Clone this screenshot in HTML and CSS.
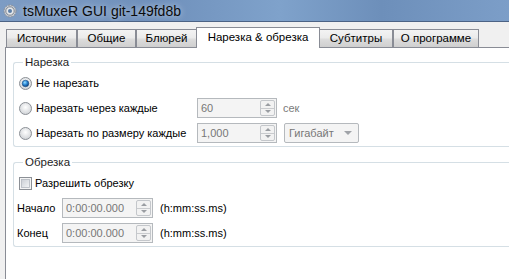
FILE: index.html
```html
<!DOCTYPE html>
<html lang="ru">
<head>
    <meta charset="UTF-8" />
    <title>tsMuxeR GUI</title>
    <link rel="stylesheet" href="styles.css">
</head>
<body>
    <div class="window">
        <div class="titlebar">
            <svg class="app-icon" width="14" height="14" viewBox="0 0 14 14">
                <circle cx="7" cy="7" r="6" fill="#c8ccd2" stroke="#8a9099" stroke-width="1" stroke-dasharray="2 1.2" />
                <circle cx="7" cy="7" r="4.2" fill="#e6e8eb" stroke="#7d8590" stroke-width="1" />
                <circle cx="7" cy="7" r="2" fill="#5d7fa8" />
            </svg>
            <span>tsMuxeR GUI git-149fd8b</span>
        </div>

        <div class="client">
            <div class="tabs">
                <div class="tab t-src">Источник</div>
                <div class="tab t-gen">Общие</div>
                <div class="tab t-bd">Блюрей</div>
                <div class="tab tab-active">Нарезка &amp; обрезка</div>
                <div class="tab t-sub">Субтитры</div>
                <div class="tab t-about">О программе</div>
            </div>

            <div class="pane">
                <fieldset class="group">
                    <legend>Нарезка</legend>
                    <div class="row">
                        <span class="opt">
                            <svg class="radio" width="13" height="13" viewBox="0 0 13 13">
                                <defs>
                                    <radialGradient id="rbg" cx="50%" cy="40%" r="60%">
                                        <stop offset="0" stop-color="#ffffff" />
                                        <stop offset="1" stop-color="#cfd2d6" />
                                    </radialGradient>
                                    <radialGradient id="rdot" cx="40%" cy="35%" r="65%">
                                        <stop offset="0" stop-color="#9be0ff" />
                                        <stop offset="0.5" stop-color="#2d8ad8" />
                                        <stop offset="1" stop-color="#0b3f7a" />
                                    </radialGradient>
                                </defs>
                                <circle cx="6.5" cy="6.5" r="6" fill="url(#rbg)" stroke="#8c9096" />
                                <circle cx="6.5" cy="6.5" r="3.3" fill="url(#rdot)" stroke="#1d4f86" stroke-width="0.6" />
                            </svg>
                            Не нарезать
                        </span>
                    </div>
                    <div class="row">
                        <span class="opt opt-wide">
                            <svg class="radio" width="13" height="13" viewBox="0 0 13 13">
                                <circle cx="6.5" cy="6.5" r="6" fill="url(#rbg)" stroke="#8c9096" />
                            </svg>
                            Нарезать через каждые
                        </span>
                        <div class="spin spin-short">
                            <span class="spin-val">60</span>
                            <span class="spin-btns"><span class="up"></span><span class="down"></span></span>
                        </div>
                        <span class="unit">сек</span>
                    </div>
                    <div class="row">
                        <span class="opt opt-wide">
                            <svg class="radio" width="13" height="13" viewBox="0 0 13 13">
                                <circle cx="6.5" cy="6.5" r="6" fill="url(#rbg)" stroke="#8c9096" />
                            </svg>
                            Нарезать по размеру каждые
                        </span>
                        <div class="spin spin-short">
                            <span class="spin-val">1,000</span>
                            <span class="spin-btns"><span class="up"></span><span class="down"></span></span>
                        </div>
                        <div class="combo">
                            <span>Гигабайт</span>
                            <span class="combo-arrow"></span>
                        </div>
                    </div>
                </fieldset>

                <fieldset class="group group-cut">
                    <legend>Обрезка</legend>
                    <div class="row">
                        <span class="opt">
                            <svg class="check" width="13" height="13" viewBox="0 0 13 13">
                                <defs>
                                    <linearGradient id="cbg" x1="0" y1="0" x2="1" y2="1">
                                        <stop offset="0" stop-color="#cbcfd5" />
                                        <stop offset="1" stop-color="#f4f5f6" />
                                    </linearGradient>
                                </defs>
                                <rect x="0.5" y="0.5" width="12" height="12" fill="#f4f4f4" stroke="#8c9096" />
                                <rect x="2.5" y="2.5" width="8" height="8" fill="url(#cbg)" stroke="#b4b9c0" stroke-width="0.8" />
                            </svg>
                            Разрешить обрезку
                        </span>
                    </div>
                    <div class="row">
                        <span class="lbl">Начало</span>
                        <div class="spin spin-time">
                            <span class="spin-val">0:00:00.000</span>
                            <span class="spin-btns"><span class="up"></span><span class="down"></span></span>
                        </div>
                        <span class="hint">(h:mm:ss.ms)</span>
                    </div>
                    <div class="row">
                        <span class="lbl">Конец</span>
                        <div class="spin spin-time">
                            <span class="spin-val">0:00:00.000</span>
                            <span class="spin-btns"><span class="up"></span><span class="down"></span></span>
                        </div>
                        <span class="hint">(h:mm:ss.ms)</span>
                    </div>
                </fieldset>
            </div>
        </div>
    </div>
</body>
</html>
```

FILE: styles.css
```css
body {
    margin: 0;
    width: 509px;
    height: 279px;
    overflow: hidden;
    font-family: 'Liberation Sans', Arial, sans-serif;
    font-size: 11px;
    color: #000;
    background-color: #f0f0f0;
}

.window {
    width: 509px;
    overflow: hidden;
}

.titlebar {
    height: 21px;
    display: flex;
    align-items: center;
    gap: 6px;
    padding-left: 3px;
    font-size: 14px;
    background: linear-gradient(to right, #7d9cc4 0%, #6f90bb 30%, #7fa2cb 55%, #6d8fba 75%, #7c9ec8 100%);
    border-bottom: 1px solid #4c6385;
}

    .titlebar span {
        color: #0b0b0b;
        text-shadow: 0 0 6px rgba(255, 255, 255, 0.7);
    }

.client {
    background-color: #f0f0f0;
}

.tabs {
    display: flex;
    align-items: flex-end;
    height: 25px;
    padding-left: 6px;
}

.tab {
    flex: none;
    box-sizing: border-box;
    height: 18px;
    line-height: 16px;
    font-size: 11.5px;
    text-align: center;
    white-space: nowrap;
    border: 1px solid #898c95;
    border-bottom: none;
    background: linear-gradient(#f3f3f3, #ebebeb 45%, #dcdcdc 55%, #cfcfcf);
}

.t-src { width: 71px; }
.t-gen { width: 59px; }
.t-bd { width: 61px; }
.t-sub { width: 74px; }
.t-about { width: 86px; }

.tab-active {
    width: 124px;
    height: 21px;
    line-height: 19px;
    margin: 0 -1px -1px -1px;
    background: #fff;
    position: relative;
    z-index: 1;
}

.pane {
    height: 240px;
    margin-left: 5px;
    padding: 7px 0 0 7px;
    box-sizing: border-box;
    background: #fff;
    border: 1px solid #898c95;
    border-right: none;
}

.group {
    margin: 0;
    padding: 4px 0 3px 5px;
    min-width: 0;
    border: 1px solid #d5dfe5;
    border-right: none;
    border-radius: 3px 0 0 3px;
    display: flex;
    flex-direction: column;
    gap: 5px;
}

    .group legend {
        padding: 0 2px;
        margin-left: 4px;
        line-height: 14px;
        font-size: 11.5px;
        color: #1e1e1e;
    }

.group-cut {
    margin-top: 8px;
}

.row {
    display: flex;
    align-items: center;
    height: 20px;
    white-space: nowrap;
}

.opt {
    display: flex;
    flex: none;
    align-items: center;
    gap: 4px;
}

.opt-wide {
    width: 178px;
}

.check {
    margin-right: -1px;
}

.spin {
    display: flex;
    flex: none;
    box-sizing: border-box;
    height: 20px;
    border: 1px solid #b5b9bd;
    background: #f4f4f4;
    color: #777;
}

.spin-short { width: 80px; }

.spin-time { width: 91px; }

.spin-val {
    flex: 1;
    padding-left: 3px;
    line-height: 18px;
}

.spin-btns {
    width: 13px;
    margin: 1px 1px 1px 0;
    display: flex;
    flex-direction: column;
    border: 1px solid #c4c7cb;
    border-radius: 2px;
    background: #f2f2f2;
}

    .spin-btns .up,
    .spin-btns .down {
        flex: 1;
        display: flex;
        align-items: center;
        justify-content: center;
    }

    .spin-btns .up {
        border-bottom: 1px solid #c9cbce;
    }

        .spin-btns .up::before {
            content: "";
            border: 3px solid transparent;
            border-top: none;
            border-bottom: 3px solid #9a9da2;
        }

        .spin-btns .down::before {
            content: "";
            border: 3px solid transparent;
            border-bottom: none;
            border-top: 3px solid #9a9da2;
        }

.unit {
    margin-left: 6px;
    color: #7a7a7a;
}

.combo {
    display: flex;
    flex: none;
    align-items: center;
    justify-content: space-between;
    box-sizing: border-box;
    width: 75px;
    height: 20px;
    margin-left: 7px;
    padding: 0 6px 0 4px;
    border: 1px solid #b5b9bd;
    border-radius: 2px;
    background: #f4f4f4;
    color: #777;
}

.combo-arrow {
    border: 4px solid transparent;
    border-bottom: none;
    border-top: 4px solid #a0a3a8;
}

.lbl {
    width: 45px;
    margin-left: -2px;
}

.hint {
    margin-left: 7px;
}
```
